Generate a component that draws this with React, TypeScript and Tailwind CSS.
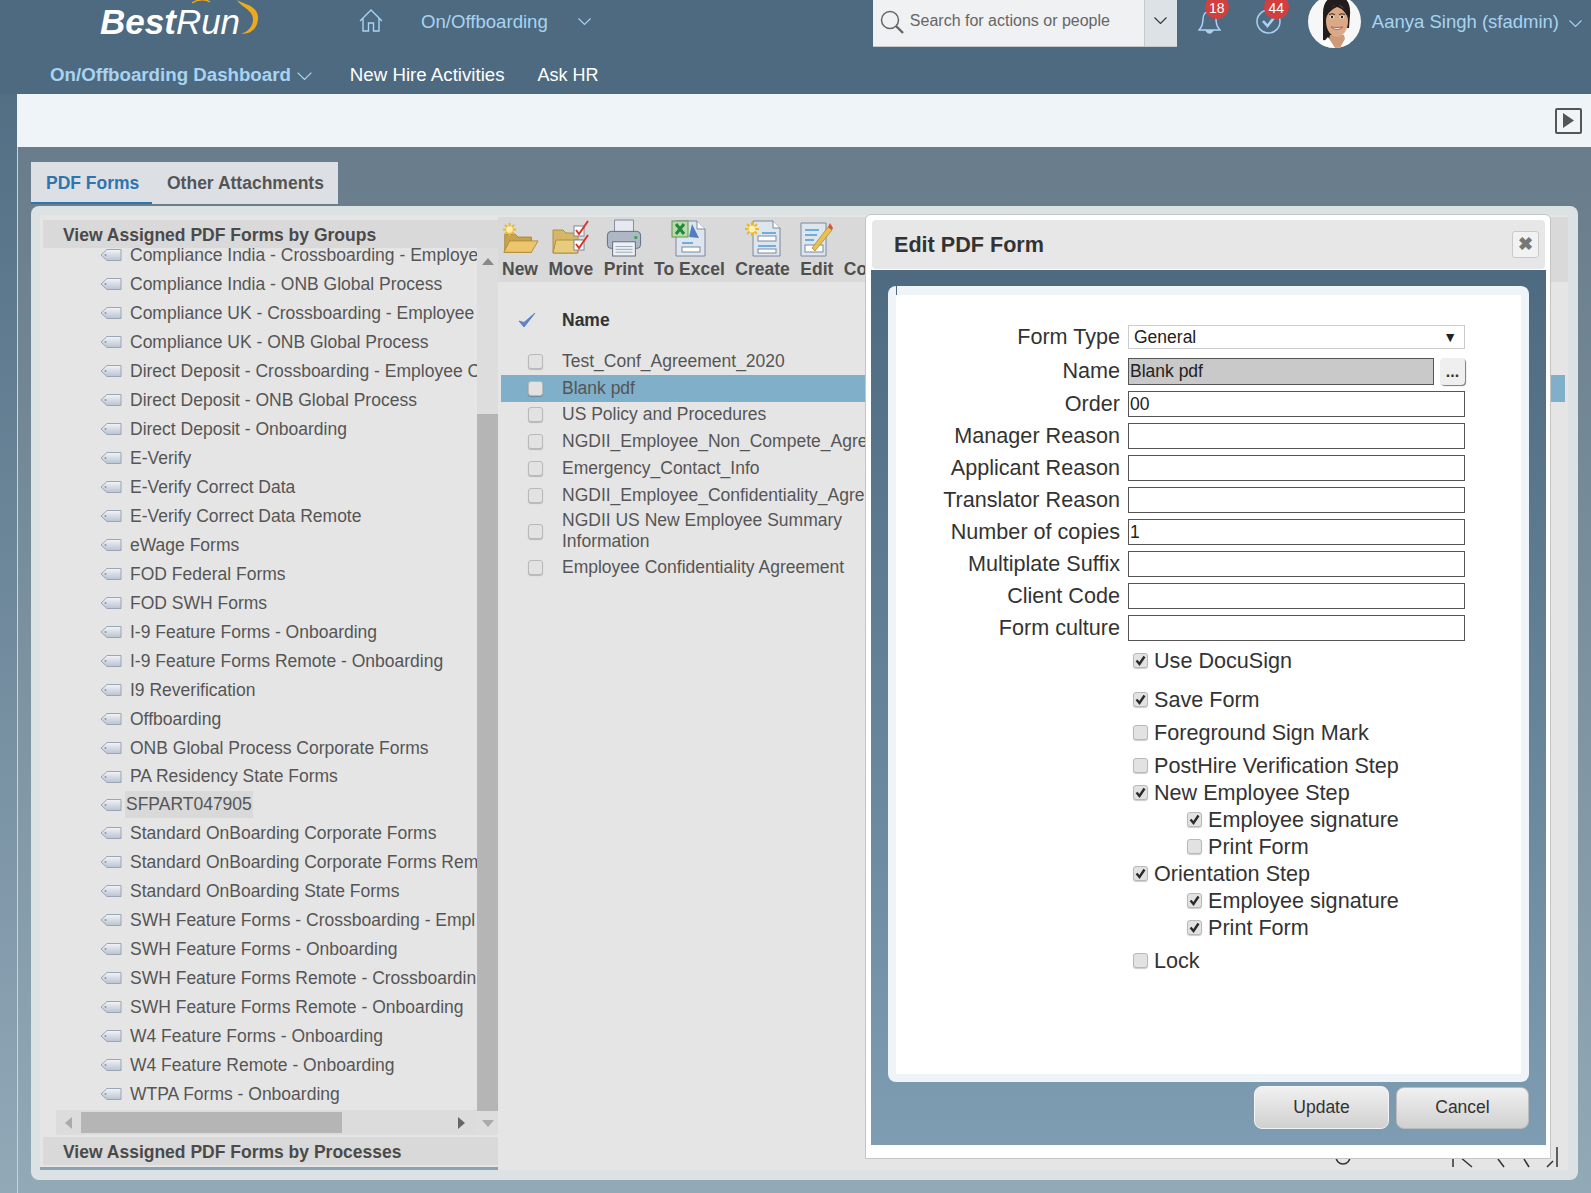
import React from "react";

const font = "font-['Liberation_Sans',Arial,sans-serif]";

const tree: string[] = [
  "Compliance India - Crossboarding - Employe",
  "Compliance India - ONB Global Process",
  "Compliance UK - Crossboarding - Employee",
  "Compliance UK - ONB Global Process",
  "Direct Deposit - Crossboarding - Employee C",
  "Direct Deposit - ONB Global Process",
  "Direct Deposit - Onboarding",
  "E-Verify",
  "E-Verify Correct Data",
  "E-Verify Correct Data Remote",
  "eWage Forms",
  "FOD Federal Forms",
  "FOD SWH Forms",
  "I-9 Feature Forms - Onboarding",
  "I-9 Feature Forms Remote - Onboarding",
  "I9 Reverification",
  "Offboarding",
  "ONB Global Process Corporate Forms",
  "PA Residency State Forms",
  "SFPART047905",
  "Standard OnBoarding Corporate Forms",
  "Standard OnBoarding Corporate Forms Rem",
  "Standard OnBoarding State Forms",
  "SWH Feature Forms - Crossboarding - Empl",
  "SWH Feature Forms - Onboarding",
  "SWH Feature Forms Remote - Crossboardin",
  "SWH Feature Forms Remote - Onboarding",
  "W4 Feature Forms - Onboarding",
  "W4 Feature Remote - Onboarding",
  "WTPA Forms - Onboarding",
];

function Tag() {
  return (
    <svg width="22" height="14" viewBox="0 0 22 14" className="shrink-0">
      <defs>
        <linearGradient id="tagfill" x1="0" y1="0" x2="0" y2="1">
          <stop offset="0" stopColor="#f2f4f7" />
          <stop offset="1" stopColor="#b9c3d2" />
        </linearGradient>
      </defs>
      <path d="M1 7 L7 1.5 H21 V12.5 H7 Z" fill="url(#tagfill)" stroke="#9aa5b5" strokeWidth="1" />
      <circle cx="5.5" cy="7" r="1" fill="#8a95a5" />
    </svg>
  );
}

function Chevron({ color, w = 13, h = 7 }: { color: string; w?: number; h?: number }) {
  return (
    <svg width={w} height={h} viewBox="0 0 13 7" className="shrink-0">
      <path d="M0.5 0.5 L6.5 6.5 L12.5 0.5" fill="none" stroke={color} strokeWidth="1.1" />
    </svg>
  );
}

function Spark({ x = 7, y = 8 }: { x?: number; y?: number }) {
  const rays = [0, 45, 90, 135];
  return (
    <g transform={`translate(${x} ${y})`}>
      {rays.map((r) => (
        <rect key={r} x="-7" y="-1" width="14" height="2" fill="#f2b61e" transform={`rotate(${r})`} />
      ))}
      <circle r="3.4" fill="#fff2a8" />
    </g>
  );
}

function FolderNew() {
  return (
    <svg width="38" height="38" viewBox="0 0 40 38" className="shrink-0">
      <path d="M4 14 H15 L18 17 H32 V33 H4 Z" fill="#c9a24e" stroke="#a98636" />
      <path d="M9 21 H39 L32 33 H3 Z" fill="#ecc56c" stroke="#b08c3c" />
      <Spark x={9} y={9} />
    </svg>
  );
}
function FolderMove() {
  return (
    <svg width="38" height="38" viewBox="0 0 38 38" className="shrink-0">
      <path d="M1 10 H11 L14 13 H26 V33 H1 Z" fill="#d6b768" stroke="#ad9044" />
      <path d="M4 20 H30 L25 33 H1 Z" fill="#e8cb7c" stroke="#ad9044" />
      <rect x="22" y="6" width="10" height="10" fill="#fff" stroke="#7d8899" />
      <rect x="22" y="20" width="10" height="10" fill="#fff" stroke="#7d8899" />
      <path d="M24 10 L27 14 L36 1" fill="none" stroke="#d8352b" strokeWidth="2" />
      <path d="M24 24 L27 28 L36 15" fill="none" stroke="#d8352b" strokeWidth="2" />
    </svg>
  );
}
function Printer() {
  return (
    <svg width="36" height="40" viewBox="0 0 38 40" className="shrink-0">
      <path d="M9 1 H29 V14 H9 Z" fill="#e6e9ef" stroke="#7e8a9a" />
      <rect x="1.5" y="13" width="35" height="18" rx="4" fill="#aeb7c4" stroke="#5f6b7b" />
      <rect x="30" y="18" width="3" height="3" fill="#3aa04a" />
      <rect x="7" y="24" width="24" height="15" fill="#edf0f4" stroke="#5f6b7b" />
      <path d="M10 29 H28 M10 32 H28 M10 35 H28" stroke="#9aa5b5" />
    </svg>
  );
}
function ExcelDoc() {
  return (
    <svg width="36" height="38" viewBox="0 0 36 38" className="shrink-0">
      <path d="M5 1 H26 L34 9 V36 H5 Z" fill="#dfe5ed" stroke="#7888a0" />
      <path d="M26 1 V9 H34" fill="#fff" stroke="#7888a0" />
      <path d="M11 23 H22" stroke="#4b9ad6" strokeWidth="1.5" />
      <rect x="11" y="27" width="18" height="5" fill="#fff" stroke="#7888a0" />
      <rect x="1" y="1" width="16" height="16" fill="#bcd8ae" stroke="#5c9a50" />
      <path d="M5 4 L13 14 M13 4 L5 14" stroke="#1f8a3a" strokeWidth="3" />
      <path d="M18 17 L21 4 L28 18 Z" fill="#4f7fc0" />
    </svg>
  );
}
function CreateDoc() {
  return (
    <svg width="38" height="38" viewBox="0 0 38 38" className="shrink-0">
      <path d="M9 1 H29 L36 8 V36 H9 Z" fill="#dfe5ed" stroke="#7888a0" />
      <path d="M29 1 V8 H36" fill="#fff" stroke="#7888a0" />
      <path d="M18 13 H32 M14 26 H32" stroke="#4b9ad6" strokeWidth="1.5" />
      <rect x="14" y="16" width="18" height="5" fill="#fff" stroke="#7888a0" />
      <rect x="14" y="29" width="18" height="4" fill="#fff" stroke="#7888a0" />
      <Spark x={8} y={9} />
    </svg>
  );
}
function EditDoc() {
  return (
    <svg width="34" height="38" viewBox="0 0 34 38" className="shrink-0">
      <path d="M1 3 H26 V36 H1 Z" fill="#dfe5ed" stroke="#7888a0" />
      <path d="M5 10 H19 M5 15 H17 M5 20 H14" stroke="#4b9ad6" strokeWidth="1.5" />
      <rect x="5" y="25" width="18" height="7" fill="#fff" stroke="#7888a0" />
      <path d="M12 28 L28 7 L32 10 L15 31 Z" fill="#e8c250" stroke="#a5842e" strokeWidth="0.7" />
      <path d="M28 7 L30 3 L33 8 L32 10 Z" fill="#d8553b" />
    </svg>
  );
}

function Box({ on }: { on?: boolean }) {
  return (
    <div className="relative w-[15px] h-[15px] shrink-0 rounded-[3px] border border-[#b9b9b9] bg-[#e2e2e2] shadow-[0_1px_1px_rgba(0,0,0,0.2)]">
      {on && (
        <svg width="13" height="13" viewBox="0 0 13 13" className="absolute left-0 top-0">
          <path d="M2.5 6.5 L5.5 10 L10.5 2.5" fill="none" stroke="#2b2b2b" strokeWidth="2.4" />
        </svg>
      )}
    </div>
  );
}

function Field({ label, value, mt }: { label: string; value?: string; mt: string }) {
  return (
    <div className={`flex items-center h-[26px] ${mt}`}>
      <div className="w-[224px] text-right text-[21.6px] text-[#333] whitespace-nowrap">{label}</div>
      <div className="ml-2 w-[337px] h-full border border-[#555] bg-white text-[17.5px] leading-[24px] pl-px text-[#222]">
        {value}
      </div>
    </div>
  );
}

function CheckRow({ label, on, sub, mb }: { label: string; on?: boolean; sub?: boolean; mb?: string }) {
  return (
    <div className={`flex items-center h-[27px] text-[21.6px] text-[#333] ${sub ? "ml-[291px]" : "ml-[237px]"} ${mb ?? ""}`}>
      <div className="mb-[3px]"><Box on={on} /></div>
      <span className="ml-[6px] whitespace-nowrap">{label}</span>
    </div>
  );
}

function Avatar() {
  return (
    <svg width="53" height="53" viewBox="0 0 53 53" className="absolute left-0 top-[-5px] rounded-full">
      <rect width="53" height="53" fill="#f7f7f7" />
      <path d="M15 45 V18 C15 6 22 1 29 1 C38 1 43 8 42 20 L41 33 H32 L22 46 Z" fill="#221c1c" />
      <path d="M22 40 L36 40 L39 53 H19 Z" fill="#cf9a78" />
      <ellipse cx="29" cy="26" rx="11" ry="16" fill="#dba986" />
      <path d="M18 23 C18 13 24 12 29 9 C34 12 40 14 40 23 C37 16 33 13 29 12 C25 14 21 16 18 23 Z" fill="#221c1c" />
      <path d="M21 19.5 Q24 18 27 19.5 M31 19.5 Q34 18 37 19.5" stroke="#3a2820" strokeWidth="1" fill="none" />
      <ellipse cx="24" cy="22" rx="2.4" ry="1.5" fill="#fff" />
      <ellipse cx="34" cy="22" rx="2.4" ry="1.5" fill="#fff" />
      <circle cx="24" cy="22" r="1.3" fill="#2a1a14" />
      <circle cx="34" cy="22" r="1.3" fill="#2a1a14" />
      <path d="M23 32 Q29 37 35 32 Q29 33 23 32 Z" fill="#fff" stroke="#b0544e" strokeWidth="0.9" />
      <path d="M10 53 L20 42 L27 53 Z M32 53 L38 42 L47 53 Z" fill="#fff" />
    </svg>
  );
}

function TopBar() {
  const blue = "text-[#a9d3f2]";
  return (
    <div className="h-[94px] bg-[#4d6a80] flex flex-col">
      <div className="h-[47px] flex items-start">
        <div className="relative ml-[100px] w-[160px] h-[47px] flex items-center text-white italic text-[35px] leading-none pb-[5px]">
          <span className="font-bold">Best</span>
          <span>Run</span>
          <svg width="70" height="36" viewBox="0 0 70 36" className="absolute left-[92px] top-0">
            <path d="M0 3 C6 -1 14 -1 18 2" fill="none" stroke="#eeaa1c" strokeWidth="1.4" />
            <path d="M45 0 C50 4 67 5 66 19 C65 30 58 34 49 34 C57 31 61 26 61 19 C61 10 49 7 45 0 Z" fill="#eeaa1c" />
          </svg>
        </div>
        <svg width="24" height="23" viewBox="0 0 24 23" className="ml-[99px] mt-[9px]" fill="none" stroke="#a9d3f2" strokeWidth="1.4">
          <path d="M1 12 L12 1 L23 12 M4 9.5 V22 H9.5 V14 H14.5 V22 H20 V9.5" />
        </svg>
        <div className={`ml-[38px] mt-[8px] text-[18.6px] ${blue}`}>On/Offboarding</div>
        <div className="ml-[30px] mt-[18px]"><Chevron color="#a9d3f2" /></div>
        <div className="ml-auto flex h-[47px] w-[304px] bg-[#eff1f3] border-b border-[#c6c9cc] items-center">
          <svg width="24" height="24" viewBox="0 0 24 24" className="ml-[7px] mb-[2px]" fill="none" stroke="#666">
            <circle cx="10" cy="10" r="8.5" strokeWidth="1.5" />
            <path d="M16 16 L23 23" strokeWidth="2.4" />
          </svg>
          <span className="ml-[6px] mb-[4px] text-[16px] text-[#666] whitespace-nowrap">Search for actions or people</span>
          <div className="ml-auto w-[33px] h-full bg-[#dde2e6] border-l border-[#c6c9cc] flex items-center justify-center pb-[5px]">
            <Chevron color="#333" />
          </div>
        </div>
        <div className="relative ml-[21px] mt-[10px] w-[23px] h-[24px]">
          <svg width="23" height="24" viewBox="0 0 23 24" fill="none" stroke="#a9d3f2" strokeWidth="1.5">
            <path d="M1 20 C4 17 5 14 5 9 C5 4 8 1.5 11.5 1.5 C15 1.5 18 4 18 9 C18 14 19 17 22 20 Z" />
            <path d="M8.5 21 Q11.5 25 14.5 21 Z" fill="#a9d3f2" />
          </svg>
          <div className="absolute left-[7px] top-[-15px] w-[24px] h-[24px] rounded-full bg-[#d13f3f] text-white text-[14px] leading-[26px] text-center">18</div>
        </div>
        <div className="relative ml-[35px] mt-[9px] w-[25px] h-[25px]">
          <svg width="25" height="25" viewBox="0 0 25 25" fill="none" stroke="#a9d3f2">
            <circle cx="12.5" cy="12.5" r="11.5" strokeWidth="1.5" />
            <path d="M7 12 L11.5 17 L18.5 8" strokeWidth="2.6" />
          </svg>
          <div className="absolute left-[8px] top-[-14px] w-[25px] h-[24px] rounded-full bg-[#d13f3f] text-white text-[14px] leading-[26px] text-center">44</div>
        </div>
        <div className="relative ml-[27px] w-[53px] h-[48px]"><Avatar /></div>
        <div className={`ml-[11px] mt-[8px] text-[18.5px] whitespace-nowrap ${blue}`}>Aanya Singh (sfadmin)</div>
        <div className="ml-[10px] mt-[20px] mr-[9px]"><Chevron color="#a9d3f2" /></div>
      </div>
      <div className="flex items-center h-[47px] pt-[10px] text-[18.7px]">
        <span className={`ml-[50px] font-bold ${blue}`}>On/Offboarding Dashboard</span>
        <div className="ml-[6px]"><Chevron color="#a9d3f2" w={15} h={8} /></div>
        <span className="ml-[38px] text-white">New Hire Activities</span>
        <span className="ml-[33px] text-[18px] text-white">Ask HR</span>
      </div>
    </div>
  );
}

function LeftPane() {
  return (
    <div className="w-[458px] shrink-0 flex flex-col pt-[5px]">
      <div className="ml-[3px] h-[28px] bg-[#d9d9d9] pl-5 pt-px text-[17.5px] leading-[28px] font-bold text-[#4a4a4a] whitespace-nowrap">
        View Assigned PDF Forms by Groups
      </div>
      <div className="flex h-[887px]">
        <div className="flex-1 min-w-0 flex flex-col">
          <div className="flex-1 overflow-hidden">
            <div className="-mt-[7.5px]">
              {tree.map((t) => {
                const s = t === "SFPART047905";
                const p = t === "PA Residency State Forms";
                return (
                  <div key={t} className={`flex items-center pl-[60px] text-[17.5px] text-[#555] whitespace-nowrap ${s || p ? "h-[28px]" : "h-[29px]"}`}>
                    <Tag />
                    <span className={s ? "ml-[3px] px-px bg-[#d9d9d9]" : "ml-[8px]"}>{t}</span>
                  </div>
                );
              })}
            </div>
          </div>
          <div className="ml-[16px] h-[25px] bg-[#dcdcdc] flex items-center">
            <svg width="7" height="12" viewBox="0 0 7 12" className="ml-[9px]"><path d="M7 0 V12 L0 6 Z" fill="#aaa" /></svg>
            <div className="ml-[9px] w-[261px] h-[21px] bg-[#b5b5b5]" />
            <svg width="7" height="12" viewBox="0 0 7 12" className="ml-auto mr-[12px]"><path d="M0 0 V12 L7 6 Z" fill="#666" /></svg>
          </div>
        </div>
        <div className="w-[21px] bg-[#dddddd] flex flex-col items-center">
          <svg width="12" height="7" viewBox="0 0 12 7" className="mt-[10px]"><path d="M0 7 H12 L6 0 Z" fill="#888" /></svg>
          <div className="mt-[149px] w-full h-[697px] bg-[#b5b5b5]" />
          <svg width="12" height="7" viewBox="0 0 12 7" className="mt-[9px]"><path d="M0 0 H12 L6 7 Z" fill="#aaa" /></svg>
        </div>
      </div>
      <div className="mt-[2px] ml-[3px] h-[28px] bg-[#d9d9d9] pl-5 pt-px text-[17.5px] leading-[28px] font-bold text-[#4a4a4a]">
        View Assigned PDF Forms by Processes
      </div>
      <div className="mt-[2px] h-[3px] bg-[#8aa3b4]" />
    </div>
  );
}

const tools: { label: string; icon: React.ReactNode }[] = [
  { label: "New", icon: <FolderNew /> },
  { label: "Move", icon: <FolderMove /> },
  { label: "Print", icon: <Printer /> },
  { label: "To Excel", icon: <ExcelDoc /> },
  { label: "Create", icon: <CreateDoc /> },
  { label: "Edit", icon: <EditDoc /> },
  { label: "Co", icon: null },
];

const rowsData = [
  "Test_Conf_Agreement_2020",
  "Blank pdf",
  "US Policy and Procedures",
  "NGDII_Employee_Non_Compete_Agre",
  "Emergency_Contact_Info",
  "NGDII_Employee_Confidentiality_Agre",
  "NGDII US New Employee Summary Information",
  "Employee Confidentiality Agreement",
];

function RightPane() {
  return (
    <div className="flex-1 min-w-0 flex flex-col pt-[2px]">
      <div className="h-[65px] bg-[#d9d9d9] flex items-start pl-[4px] gap-[10.5px] shrink-0">
        {tools.map((t) => (
          <div key={t.label} className="flex flex-col items-center text-[17.5px] font-bold text-[#4f4f4f] leading-[22px]">
            <div className="h-[41px] w-0 flex items-end justify-center">{t.icon}</div>
            <span className="whitespace-nowrap">{t.label}</span>
          </div>
        ))}
      </div>
      <div className="h-[66px] pt-[10px] flex items-center shrink-0">
        <svg width="18" height="16" viewBox="0 0 18 16" className="ml-[20px]">
          <path d="M1 9 L6 15 L17 1 L6 10.5 Z" fill="#5f82c6" stroke="#5f82c6" />
        </svg>
        <span className="ml-[26px] text-[17.5px] font-bold text-[#333]">Name</span>
      </div>
      <div className="mx-[3px]">
        {rowsData.map((r) => (
          <div
            key={r}
            className={`flex items-center text-[17.5px] leading-[21px] text-[#555] ${r.startsWith("NGDII US") ? "h-[45px]" : "h-[26.8px]"} ${r === "Blank pdf" ? "bg-[#7fafc9]" : ""}`}
          >
            <div className="ml-[27px]"><Box /></div>
            <span className={`ml-[19px] ${r.startsWith("NGDII US") ? "w-[290px]" : "whitespace-nowrap"}`}>{r}</span>
          </div>
        ))}
      </div>
      <div className="mt-auto h-[27px] flex justify-end shrink-0 overflow-hidden">
        <svg width="240" height="27" viewBox="0 0 240 27" fill="none" stroke="#333" strokeWidth="1.5" className="mr-[5px]">
          <circle cx="20" cy="14" r="7" />
          <path d="M130 24 V14 M137 14 L149 24 M175 16 L181 24 M206 24 L201 16 M224 24 L230 18 M234 4 V24" />
        </svg>
      </div>
    </div>
  );
}

function Dialog() {
  return (
    <div className="absolute left-[865px] top-[214px] w-[686px] h-[945px] bg-white border border-[#c4c4c4] rounded-t-[6px] pt-[5px] pl-[5px] pr-[4px] flex flex-col">
      <div className="mx-px h-[49px] rounded-[4px] bg-[#e7e7e7] flex items-center pl-[22px] pr-[6px] shrink-0">
        <span className="pt-px text-[21.6px] font-bold text-[#333]">Edit PDF Form</span>
        <div className="ml-auto w-[27px] h-[27px] rounded-[3px] border border-[#c9c9c9] bg-[#f2f2f2] text-[#777] text-[18px] font-bold leading-[25px] text-center">✖</div>
      </div>
      <div className="mt-px h-[875px] bg-linear-to-b from-[#4d6a80] to-[#7f9db2] px-[17px] pt-[16px] flex flex-col">
        <div className="h-[796px] rounded-[8px] bg-[#eff4f8] px-[8px] pb-[8px] flex flex-col">
          <div className="h-[9px] w-px bg-[#4d6a80] shrink-0" />
          <div className="flex-1 bg-white pt-[30px]">
            <div className="flex items-center h-[24px]">
              <div className="w-[224px] text-right text-[21.6px] text-[#333]">Form Type</div>
              <div className="ml-2 w-[337px] h-full border border-[#ccc] text-[17.5px] leading-[22px] pl-[5px] pr-[7px] text-[#222] flex justify-between">
                <span>General</span><span className="text-[14px]">▼</span>
              </div>
            </div>
            <div className="flex items-center h-[27px] mt-[9px]">
              <div className="w-[224px] text-right text-[21.6px] text-[#333]">Name</div>
              <div className="ml-2 w-[306px] h-full border border-[#555] bg-[#c9c9c9] text-[17.5px] leading-[25px] pl-px text-[#222]">Blank pdf</div>
              <div className="ml-[6px] w-[25px] h-full rounded-[4px] bg-[#efefef] shadow-[1px_1px_1px_#777] text-[16px] font-bold leading-[28px] text-center text-[#333]">...</div>
            </div>
            <Field label="Order" value="00" mt="mt-[6px]" />
            <Field label="Manager Reason" mt="mt-[6px]" />
            <Field label="Applicant Reason" mt="mt-[6px]" />
            <Field label="Translator Reason" mt="mt-[6px]" />
            <Field label="Number of copies" value="1" mt="mt-[6px]" />
            <Field label="Multiplate Suffix" mt="mt-[6px]" />
            <Field label="Client Code" mt="mt-[6px]" />
            <Field label="Form culture" mt="mt-[6px]" />
            <div className="mt-[7px]">
              <CheckRow label="Use DocuSign" on mb="mb-[12px]" />
              <CheckRow label="Save Form" on mb="mb-[6px]" />
              <CheckRow label="Foreground Sign Mark" mb="mb-[6px]" />
              <CheckRow label="PostHire Verification Step" />
              <CheckRow label="New Employee Step" on />
              <CheckRow label="Employee signature" on sub />
              <CheckRow label="Print Form" sub />
              <CheckRow label="Orientation Step" on />
              <CheckRow label="Employee signature" on sub />
              <CheckRow label="Print Form" on sub mb="mb-[6px]" />
              <CheckRow label="Lock" />
            </div>
          </div>
        </div>
        <div className="mt-[4px] flex justify-end gap-[7px] text-[17.5px] text-[#333]">
          <div className="w-[135px] h-[43px] rounded-[8px] border border-[#f4f4f4] bg-linear-to-b from-[#f1f1f1] to-[#d0d0d0] flex items-center justify-center">Update</div>
          <div className="w-[133px] h-[42px] mt-px rounded-[8px] border border-[#bbb] bg-linear-to-b from-[#f1f1f1] to-[#d0d0d0] flex items-center justify-center pb-[2px]">Cancel</div>
        </div>
      </div>
    </div>
  );
}

export default function App() {
  return (
    <div className={`relative w-[1591px] h-[1193px] overflow-hidden bg-linear-to-b from-[#4d6a80] to-[#92a9b8] flex flex-col ${font}`}>
      <TopBar />
      <div className="ml-[17px] flex-1 min-h-0 flex flex-col">
        <div className="h-[53px] bg-[#eff4f8] flex items-center justify-end pr-[9px] shrink-0">
          <div className="w-[27px] h-[26px] border-2 border-[#555] rounded-[2px] flex items-center justify-center">
            <svg width="11" height="15" viewBox="0 0 11 15"><path d="M0 0 V15 L11 7.5 Z" fill="#555" /></svg>
          </div>
        </div>
        <div className="flex-1 min-h-0 border-l border-[#c9d3da] bg-linear-to-b from-[#687c8b] to-[#92a9b8] pt-[15px] pl-[13px] pr-[13px] pb-[13px] flex flex-col">
          <div className="w-[307px] h-[42px] bg-[#dce0e4] flex items-center shrink-0 text-[17.5px] font-bold">
            <div className="w-[121px] h-full border-b-2 border-[#2d75ae] text-[#2d75ae] flex items-center pl-[15px] pt-[2px]">PDF Forms</div>
            <div className="ml-[15px] text-[#555]">Other Attachments</div>
          </div>
          <div className="mt-[2px] flex-1 min-h-0 rounded-[8px] bg-[#dce1e4] p-[9px_10px_10px_9px]">
            <div className="h-full flex bg-[#e5e5e5]">
              <LeftPane />
              <RightPane />
            </div>
          </div>
        </div>
      </div>
      <Dialog />
    </div>
  );
}
